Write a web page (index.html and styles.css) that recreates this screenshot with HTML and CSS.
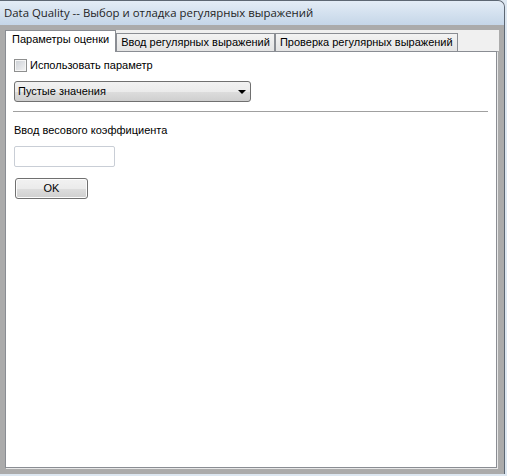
FILE: index.html
```html
<!DOCTYPE html>
<html lang="ru">
<head>
<meta charset="utf-8">
<title>Data Quality</title>
<link rel="stylesheet" href="styles.css">
</head>
<body>
<div class="window">
  <div class="titlebar">Data Quality -- Выбор и отладка регулярных выражений</div>
  <div class="client">
    <div class="tabstrip">
      <div class="tab active">Параметры оценки</div>
      <div class="tab">Ввод регулярных выражений</div>
      <div class="tab">Проверка регулярных выражений</div>
    </div>
    <div class="panel">
      <label class="check-row"><span class="checkbox"></span><span>Использовать параметр</span></label>
      <div class="select"><span>Пустые значения</span><span class="arrow"></span></div>
      <div class="separator"></div>
      <div class="field-label">Ввод весового коэффициента</div>
      <div class="textbox"></div>
      <div class="button">OK</div>
    </div>
  </div>
</div>
</body>
</html>
```

FILE: styles.css
```css
html, body {
  margin: 0;
  padding: 0;
}
body {
  background: #dde7f1;
  width: 507px;
  height: 476px;
  overflow: hidden;
  font-family: "Liberation Sans", Arial, sans-serif;
  font-size: 11px;
  line-height: 13px;
  color: #000;
}
.window {
  box-sizing: border-box;
  width: 505px;
  height: 474px;
  background: #ababab;
  border-top: 1px solid #5d6773;
  border-right: 1px solid #5d6773;
  border-top-right-radius: 7px;
  overflow: hidden;
}
.titlebar {
  height: 24px;
  line-height: 24px;
  padding-left: 4px;
  background: linear-gradient(#e3ecf6, #c5d6e8);
  font-family: "Open Sans", "Noto Sans", sans-serif;
  font-size: 11.4px;
  color: #1f1f1f;
  white-space: nowrap;
}
.client {
  margin: 5px 5px 0 5px;
}
.tabstrip {
  display: flex;
  align-items: flex-end;
  height: 21px;
  background: #f0f0f0;
  position: relative;
  z-index: 1;
}
.tab {
  box-sizing: border-box;
  height: 18px;
  line-height: 16px;
  padding: 0 4px;
  border: 1px solid #8a8d93;
  border-bottom: none;
  background: linear-gradient(#f3f3f3, #e4e4e4);
  white-space: nowrap;
}
.tab.active {
  height: 22px;
  line-height: 17px;
  margin-bottom: -1px;
  padding: 0 6px;
  background: #fff;
}
.panel {
  box-sizing: border-box;
  width: 492px;
  height: 417px;
  background: #fff;
  border: 1px solid #8a8d93;
  box-shadow: 1px 1px 0 #e8e8e8;
  padding: 7px 8px 0 8px;
  display: flex;
  flex-direction: column;
  align-items: flex-start;
}
.check-row {
  display: flex;
  align-items: center;
  gap: 3px;
  height: 13px;
}
.checkbox {
  box-sizing: border-box;
  width: 13px;
  height: 13px;
  border: 1px solid #8e8f8f;
  background: linear-gradient(135deg, #cbcfd5, #f4f4f4);
  box-shadow: inset 0 0 0 1px #f6f6f6;
}
.select {
  box-sizing: border-box;
  margin-top: 9px;
  width: 237px;
  height: 21px;
  border: 1px solid #707070;
  border-radius: 3px;
  background: linear-gradient(#f2f2f2 0%, #ebebeb 50%, #dddddd 51%, #cfcfcf 100%);
  display: flex;
  align-items: center;
  justify-content: space-between;
  padding: 0 4px 0 3px;
}
.arrow {
  width: 0;
  height: 0;
  border-left: 4px solid transparent;
  border-right: 4px solid transparent;
  border-top: 4px solid #000;
}
.separator {
  align-self: stretch;
  margin: 9px 0 0 -1px;
  height: 1px;
  background: #a0a0a0;
  border-bottom: 1px solid #fff;
}
.field-label {
  margin-top: 11px;
}
.textbox {
  box-sizing: border-box;
  margin-top: 9px;
  width: 101px;
  height: 21px;
  border: 1px solid #c9ced6;
  border-radius: 2px;
  background: #fff;
}
.button {
  box-sizing: border-box;
  margin: 11px 0 0 1px;
  width: 73px;
  height: 21px;
  border: 1px solid #707070;
  border-radius: 3px;
  background: linear-gradient(#f2f2f2 0%, #ebebeb 50%, #dddddd 51%, #cfcfcf 100%);
  box-shadow: inset 0 0 0 1px #fcfcfc;
  display: flex;
  align-items: center;
  justify-content: center;
}
```
